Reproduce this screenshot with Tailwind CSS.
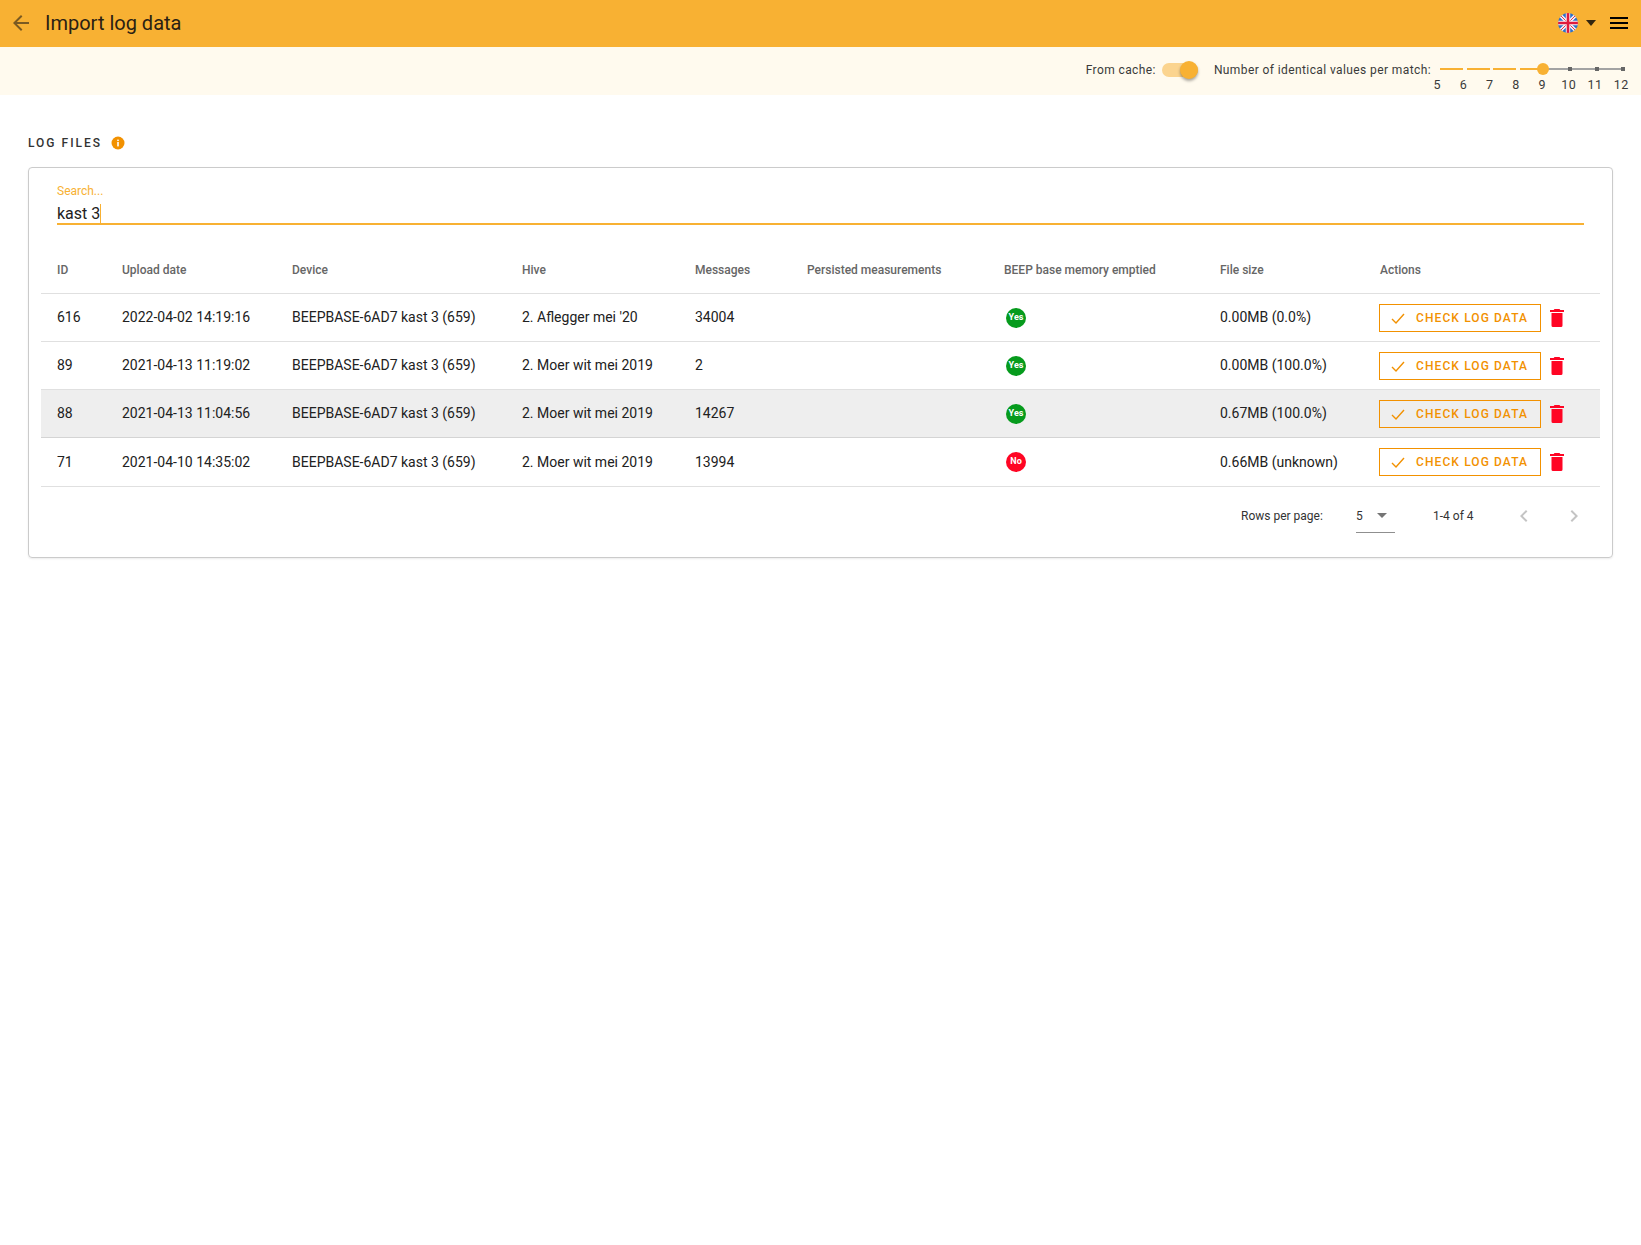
<!DOCTYPE html>
<html lang="en">
<head>
    <meta charset="UTF-8">
    <title>Import log data</title>
    <script src="https://cdn.jsdelivr.net/npm/@tailwindcss/browser@4"></script>
</head>
<body class="bg-white min-h-screen font-['Roboto',sans-serif] text-[#212121]">
    <!-- Toolbar -->
    <header class="h-[47px] bg-[#f8b133] flex items-center pb-[2px] pl-[9px] pr-[13px]">
        <svg class="w-[24px] h-[24px] text-[#7a5a22]" viewBox="0 0 24 24" fill="currentColor"><path d="M20 11H7.83l5.59-5.59L12 4l-8 8 8 8 1.41-1.41L7.83 13H20v-2z"/></svg>
        <h1 class="ml-[12px] text-[20px] leading-none font-normal text-[#2a2113]">Import log data</h1>
        <div class="ml-auto flex items-center">
            <svg class="w-[20px] h-[20px]" viewBox="0 0 20 20">
                <defs><clipPath id="flag"><circle cx="10" cy="10" r="10"/></clipPath></defs>
                <g clip-path="url(#flag)">
                    <rect width="20" height="20" fill="#2f6fc9"/>
                    <path d="M0 0L20 20M20 0L0 20" stroke="#f4f4f4" stroke-width="3.5"/>
                    <path d="M0 0L20 20M20 0L0 20" stroke="#e8304f" stroke-width="1"/>
                    <path d="M10 0V20M0 10H20" stroke="#f4f4f4" stroke-width="4.4"/>
                    <path d="M10 0V20M0 10H20" stroke="#e01a3c" stroke-width="2.6"/>
                </g>
            </svg>
            <svg class="ml-[8px] w-[10px] h-[6px] text-[#33260f]" viewBox="0 0 10 6" fill="currentColor"><path d="M0 0h10L5 6z"/></svg>
            <div class="ml-[14px] w-[18px] flex flex-col gap-[3px]">
                <span class="h-[2px] bg-black"></span>
                <span class="h-[2px] bg-black"></span>
                <span class="h-[2px] bg-black"></span>
            </div>
        </div>
    </header>

    <!-- Settings bar -->
    <div class="h-[48px] bg-[#fffaee] flex justify-end text-[12px] tracking-[0.4px] text-[#3a3a3a]">
        <div class="flex items-start pt-[14px] leading-[18px]">
            <span>From cache:</span>
            <div class="relative ml-[6px] w-[36px] h-[14px] mt-[2px] rounded-full bg-[#fbd48f]">
                <span class="absolute left-[18px] top-[-2px] w-[18px] h-[18px] rounded-full bg-[#f8b133] shadow-[0_2px_3px_rgba(0,0,0,0.35)]"></span>
            </div>
            <span class="ml-[16px]">Number of identical values per match:</span>
        </div>
        <div class="relative w-[205px] mr-[5px]">
            <div class="absolute left-[112px] right-[11px] top-[21px] h-[2px] bg-[#a3a3a3]"></div>
            <div class="absolute left-[9px] top-[21px] flex gap-[3.5px]">
                <span class="w-[23px] h-[2px] bg-[#f8b133]"></span>
                <span class="w-[23px] h-[2px] bg-[#f8b133]"></span>
                <span class="w-[23px] h-[2px] bg-[#f8b133]"></span>
                <span class="w-[23px] h-[2px] bg-[#f8b133]"></span>
            </div>
            <span class="absolute left-[106px] top-[16px] w-[12px] h-[12px] rounded-full bg-[#f8b133]"></span>
            <span class="absolute left-[137px] top-[20px] w-[4px] h-[4px] bg-[#666]"></span>
            <span class="absolute left-[164px] top-[20px] w-[4px] h-[4px] bg-[#666]"></span>
            <span class="absolute left-[190px] top-[20px] w-[4px] h-[4px] bg-[#666]"></span>
            <div class="absolute left-[-7px] w-[212px] top-[29px] flex leading-[18px] text-[12.5px]">
                <span class="w-[26.3px] text-center">5</span>
                <span class="w-[26.3px] text-center">6</span>
                <span class="w-[26.3px] text-center">7</span>
                <span class="w-[26.3px] text-center">8</span>
                <span class="w-[26.3px] text-center">9</span>
                <span class="w-[26.3px] text-center">10</span>
                <span class="w-[26.3px] text-center">11</span>
                <span class="w-[26.3px] text-center">12</span>
            </div>
        </div>
    </div>

    <main class="pl-[28px] pr-[28px] pt-[39px]">
        <div class="flex items-center h-[18px]">
            <h2 class="text-[12px] font-medium tracking-[2px] text-[#333] leading-none">LOG FILES</h2>
            <svg class="ml-[9px] w-[14px] h-[14px]" viewBox="0 0 14 14"><circle cx="7" cy="7" r="6.5" fill="#f29100"/><rect x="6.2" y="6" width="1.6" height="4.4" fill="#fff"/><rect x="6.2" y="3.6" width="1.6" height="1.5" fill="#fff"/></svg>
        </div>

        <!-- Card -->
        <section class="mt-[15px] h-[391px] border border-[#cbcbcb] rounded-[4px] shadow-[0_1px_2px_rgba(0,0,0,0.08)]">
            <div class="mx-[28px] pt-[16px]">
                <div class="text-[12px] leading-[14px] text-[#f8b133]">Search...</div>
                <div class="h-[27px] pt-[6px] border-b-2 border-[#f8b133] text-[16px] leading-[20px] flex items-center">
                    <span>kast 3</span><span class="w-px h-[20px] bg-[#f8b133]"></span>
                </div>
            </div>

            <table class="ml-[12px] mt-[23px] w-[1559px] table-fixed border-collapse text-[14px] text-left">
                <colgroup>
                    <col class="w-[65px]"><col class="w-[170px]"><col class="w-[230px]"><col class="w-[173px]"><col class="w-[112px]"><col class="w-[197px]"><col class="w-[216px]"><col class="w-[160px]"><col>
                </colgroup>
                <thead>
                    <tr class="h-[45px] text-[12px] font-medium text-[#666] border-b border-[#e0e0e0]">
                        <th class="pl-[16px] font-medium">ID</th>
                        <th class="pl-[16px] font-medium">Upload date</th>
                        <th class="pl-[16px] font-medium">Device</th>
                        <th class="pl-[16px] font-medium">Hive</th>
                        <th class="pl-[16px] font-medium">Messages</th>
                        <th class="pl-[16px] font-medium">Persisted measurements</th>
                        <th class="pl-[16px] font-medium">BEEP base memory emptied</th>
                        <th class="pl-[16px] font-medium">File size</th>
                        <th class="pl-[16px] font-medium">Actions</th>
                    </tr>
                </thead>
                <tbody>
                    <tr class="h-[48px] border-b border-[#e0e0e0]">
                        <td class="pl-[16px]">616</td>
                        <td class="pl-[16px]">2022-04-02 14:19:16</td>
                        <td class="pl-[16px]">BEEPBASE-6AD7 kast 3 (659)</td>
                        <td class="pl-[16px]">2. Aflegger mei '20</td>
                        <td class="pl-[16px]">34004</td>
                        <td class="pl-[16px]"></td>
                        <td class="pl-[18px] pt-[2px]"><span class="flex items-center justify-center w-[20px] h-[20px] rounded-full bg-[#069b1d] text-white text-[9px] font-bold">Yes</span></td>
                        <td class="pl-[16px]">0.00MB (0.0%)</td>
                        <td class="pl-[15px] pt-[2px]">
                            <div class="flex items-center">
                                <button class="flex items-center w-[162px] h-[28px] border border-[#f29100] pl-[11px] text-[#f29100] text-[12px] font-medium tracking-[1.1px]">
                                    <svg class="w-[14px] h-[14px] mr-[11px]" viewBox="0 0 14 14" fill="none" stroke="currentColor" stroke-width="1.4"><path d="M1 8l4 4 8-9"/></svg>CHECK LOG DATA
                                </button>
                                <svg class="ml-[8px] w-[16px] h-[20px] text-[#ff0524]" viewBox="0 0 16 20" fill="currentColor"><path d="M5.5 1h5l.8 1H15v2H1V2h3.7zM2.5 5h11v12.5a1.5 1.5 0 0 1-1.5 1.5H4a1.5 1.5 0 0 1-1.5-1.5z"/></svg>
                            </div>
                        </td>
                    </tr>
                    <tr class="h-[48px] border-b border-[#e0e0e0]">
                        <td class="pl-[16px]">89</td>
                        <td class="pl-[16px]">2021-04-13 11:19:02</td>
                        <td class="pl-[16px]">BEEPBASE-6AD7 kast 3 (659)</td>
                        <td class="pl-[16px]">2. Moer wit mei 2019</td>
                        <td class="pl-[16px]">2</td>
                        <td class="pl-[16px]"></td>
                        <td class="pl-[18px] pt-[2px]"><span class="flex items-center justify-center w-[20px] h-[20px] rounded-full bg-[#069b1d] text-white text-[9px] font-bold">Yes</span></td>
                        <td class="pl-[16px]">0.00MB (100.0%)</td>
                        <td class="pl-[15px] pt-[2px]">
                            <div class="flex items-center">
                                <button class="flex items-center w-[162px] h-[28px] border border-[#f29100] pl-[11px] text-[#f29100] text-[12px] font-medium tracking-[1.1px]">
                                    <svg class="w-[14px] h-[14px] mr-[11px]" viewBox="0 0 14 14" fill="none" stroke="currentColor" stroke-width="1.4"><path d="M1 8l4 4 8-9"/></svg>CHECK LOG DATA
                                </button>
                                <svg class="ml-[8px] w-[16px] h-[20px] text-[#ff0524]" viewBox="0 0 16 20" fill="currentColor"><path d="M5.5 1h5l.8 1H15v2H1V2h3.7zM2.5 5h11v12.5a1.5 1.5 0 0 1-1.5 1.5H4a1.5 1.5 0 0 1-1.5-1.5z"/></svg>
                            </div>
                        </td>
                    </tr>
                    <tr class="h-[48px] bg-[#eeeeee] border-b border-[#d4d4d4]">
                        <td class="pl-[16px]">88</td>
                        <td class="pl-[16px]">2021-04-13 11:04:56</td>
                        <td class="pl-[16px]">BEEPBASE-6AD7 kast 3 (659)</td>
                        <td class="pl-[16px]">2. Moer wit mei 2019</td>
                        <td class="pl-[16px]">14267</td>
                        <td class="pl-[16px]"></td>
                        <td class="pl-[18px] pt-[2px]"><span class="flex items-center justify-center w-[20px] h-[20px] rounded-full bg-[#069b1d] text-white text-[9px] font-bold">Yes</span></td>
                        <td class="pl-[16px]">0.67MB (100.0%)</td>
                        <td class="pl-[15px] pt-[2px]">
                            <div class="flex items-center">
                                <button class="flex items-center w-[162px] h-[28px] border border-[#f29100] pl-[11px] text-[#f29100] text-[12px] font-medium tracking-[1.1px]">
                                    <svg class="w-[14px] h-[14px] mr-[11px]" viewBox="0 0 14 14" fill="none" stroke="currentColor" stroke-width="1.4"><path d="M1 8l4 4 8-9"/></svg>CHECK LOG DATA
                                </button>
                                <svg class="ml-[8px] w-[16px] h-[20px] text-[#ff0524]" viewBox="0 0 16 20" fill="currentColor"><path d="M5.5 1h5l.8 1H15v2H1V2h3.7zM2.5 5h11v12.5a1.5 1.5 0 0 1-1.5 1.5H4a1.5 1.5 0 0 1-1.5-1.5z"/></svg>
                            </div>
                        </td>
                    </tr>
                    <tr class="h-[49px] border-b border-[#e0e0e0]">
                        <td class="pl-[16px] pt-px">71</td>
                        <td class="pl-[16px] pt-px">2021-04-10 14:35:02</td>
                        <td class="pl-[16px] pt-px">BEEPBASE-6AD7 kast 3 (659)</td>
                        <td class="pl-[16px] pt-px">2. Moer wit mei 2019</td>
                        <td class="pl-[16px] pt-px">13994</td>
                        <td class="pl-[16px]"></td>
                        <td class="pl-[18px]"><span class="flex items-center justify-center w-[20px] h-[20px] rounded-full bg-[#ff0524] text-white text-[9px] font-bold">No</span></td>
                        <td class="pl-[16px] pt-px">0.66MB (unknown)</td>
                        <td class="pl-[15px]">
                            <div class="flex items-center">
                                <button class="flex items-center w-[162px] h-[28px] border border-[#f29100] pl-[11px] text-[#f29100] text-[12px] font-medium tracking-[1.1px]">
                                    <svg class="w-[14px] h-[14px] mr-[11px]" viewBox="0 0 14 14" fill="none" stroke="currentColor" stroke-width="1.4"><path d="M1 8l4 4 8-9"/></svg>CHECK LOG DATA
                                </button>
                                <svg class="ml-[8px] w-[16px] h-[20px] text-[#ff0524]" viewBox="0 0 16 20" fill="currentColor"><path d="M5.5 1h5l.8 1H15v2H1V2h3.7zM2.5 5h11v12.5a1.5 1.5 0 0 1-1.5 1.5H4a1.5 1.5 0 0 1-1.5-1.5z"/></svg>
                            </div>
                        </td>
                    </tr>
                </tbody>
            </table>

            <!-- Pagination -->
            <div class="flex items-start h-[58px] pt-[20px] pl-[1212px] text-[12px] leading-[18px] text-[#333]">
                <span class="w-[115px]">Rows per page:</span>
                <div class="w-[39px] h-[26px] border-b border-[#8f8f8f] flex items-start">
                    <span>5</span>
                    <svg class="ml-[14px] mt-[6px] w-[10px] h-[5px] text-[#757575]" viewBox="0 0 10 5" fill="currentColor"><path d="M0 0h10L5 5z"/></svg>
                </div>
                <span class="ml-[38px]">1-4 of 4</span>
                <svg class="ml-[38px] -mt-[3px] w-[24px] h-[24px] text-[#c4c4c4]" viewBox="0 0 24 24" fill="currentColor"><path d="M15.41 7.41L14 6l-6 6 6 6 1.41-1.41L10.83 12z"/></svg>
                <svg class="ml-[26px] -mt-[3px] w-[24px] h-[24px] text-[#c4c4c4]" viewBox="0 0 24 24" fill="currentColor"><path d="M8.59 16.59L10 18l6-6-6-6-1.41 1.41L13.17 12z"/></svg>
            </div>
        </section>
    </main>
</body>
</html>
